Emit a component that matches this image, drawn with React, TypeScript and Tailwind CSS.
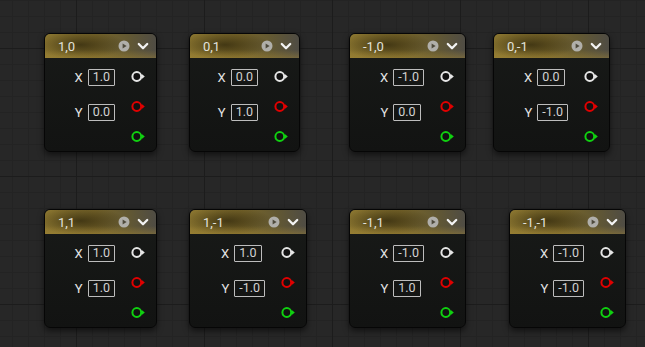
import React from "react";

type NodeProps = {
  left: number;
  top: number;
  width: number;
  title: string;
  x: string;
  y: string;
};

function PlayIcon() {
  return (
    <svg width="12" height="12" viewBox="0 0 12 12">
      <circle cx="6" cy="6" r="5.5" fill="#b0afaa" />
      <path d="M4.6 3.4 L8.6 6 L4.6 8.6 Z" fill="#4e4a3c" />
    </svg>
  );
}

function Chevron() {
  return (
    <svg width="12" height="9" viewBox="0 0 12 9">
      <path d="M1.8 2 L6 6.2 L10.2 2" fill="none" stroke="#f2f2f2" strokeWidth="2.3" strokeLinecap="round" strokeLinejoin="round" />
    </svg>
  );
}

function Pin({ color }: { color: string }) {
  return (
    <svg width="15" height="13" viewBox="0 0 15 13">
      <circle cx="5.8" cy="6.5" r="4.4" fill="#111" stroke={color} strokeWidth="2" />
      <path d="M10.8 4 L13.8 6.5 L10.8 9 Z" fill={color} />
    </svg>
  );
}

function Node({ left, top, width, title, x, y }: NodeProps) {
  return (
    <div
      className="absolute h-[119px] rounded-[6px] border border-[#060606] bg-[linear-gradient(to_bottom,#181a18,#121312)] shadow-[0_3px_6px_rgba(0,0,0,0.55)] overflow-hidden flex flex-col"
      style={{ left, top, width }}
    >
      <div className="h-[24px] shrink-0 flex items-center pl-[13px] pr-[7px] bg-[radial-gradient(ellipse_45px_14px_at_32%_45%,rgba(20,15,0,0.55),rgba(20,15,0,0)),linear-gradient(to_right,#8b7630,#77652a_45%,#625833_75%,#4f4c44)] relative">
        <div className="absolute inset-x-0 bottom-0 h-[8px] bg-[linear-gradient(to_bottom,rgba(170,140,55,0),rgba(170,140,55,0.4))]" />
        <span className="relative text-[13px] leading-none text-[#e2e2dc] font-['Roboto',sans-serif]">
          {title}
        </span>
        <div className="relative ml-auto flex items-center gap-[7px]">
          <PlayIcon />
          <Chevron />
        </div>
      </div>
      <div className="flex flex-1 justify-end pr-[10px]">
        <div className="grid grid-cols-[auto_auto] gap-x-[5px] gap-y-[18px] content-start pt-[11px] items-center">
          <span className="justify-self-end text-[13px] leading-none text-[#e4e4e4] font-['Roboto',sans-serif]">X</span>
          <div className="justify-self-start h-[17px] px-[4px] border border-[#bdbdbd] rounded-[1px] flex items-center justify-center text-[12.5px] leading-none text-[#d2d2d2] font-['Roboto',sans-serif]">
            {x}
          </div>
          <span className="justify-self-end text-[13px] leading-none text-[#e4e4e4] font-['Roboto',sans-serif]">Y</span>
          <div className="justify-self-start h-[17px] px-[4px] border border-[#bdbdbd] rounded-[1px] flex items-center justify-center text-[12.5px] leading-none text-[#d2d2d2] font-['Roboto',sans-serif]">
            {y}
          </div>
        </div>
        <div className="ml-[16px] flex flex-col gap-[10px] pt-[8px]">
          <div className="h-[20px] flex items-center"><Pin color="#e6e6e6" /></div>
          <div className="h-[20px] flex items-center"><Pin color="#e00000" /></div>
          <div className="h-[20px] flex items-center"><Pin color="#10d010" /></div>
        </div>
      </div>
    </div>
  );
}

const nodes: NodeProps[] = [
  { left: 44, top: 33, width: 113, title: "1,0", x: "1.0", y: "0.0" },
  { left: 189, top: 33, width: 111, title: "0,1", x: "0.0", y: "1.0" },
  { left: 349, top: 33, width: 117, title: "-1,0", x: "-1.0", y: "0.0" },
  { left: 493, top: 33, width: 117, title: "0,-1", x: "0.0", y: "-1.0" },
  { left: 44, top: 209, width: 113, title: "1,1", x: "1.0", y: "1.0" },
  { left: 189, top: 209, width: 118, title: "1,-1", x: "1.0", y: "-1.0" },
  { left: 349, top: 209, width: 117, title: "-1,1", x: "-1.0", y: "1.0" },
  { left: 509, top: 209, width: 117, title: "-1,-1", x: "-1.0", y: "-1.0" },
];

export default function App() {
  return (
    <div className="relative w-[645px] h-[347px] overflow-hidden bg-[#272727]">
      <svg className="absolute inset-0" width="645" height="347">
        <defs>
          <pattern id="minor" width="16" height="16" patternUnits="userSpaceOnUse" x="12" y="0">
            <path d="M0 0.5 H16 M0.5 0 V16" fill="none" stroke="#232323" strokeWidth="1" />
          </pattern>
          <pattern id="major" width="128" height="128" patternUnits="userSpaceOnUse" x="76" y="48">
            <path d="M0 0.5 H128 M0.5 0 V128" fill="none" stroke="#1c1c1c" strokeWidth="1" />
          </pattern>
        </defs>
        <rect width="645" height="347" fill="url(#minor)" />
        <rect width="645" height="347" fill="url(#major)" />
      </svg>
      {nodes.map((n) => (
        <Node key={n.title} {...n} />
      ))}
    </div>
  );
}
